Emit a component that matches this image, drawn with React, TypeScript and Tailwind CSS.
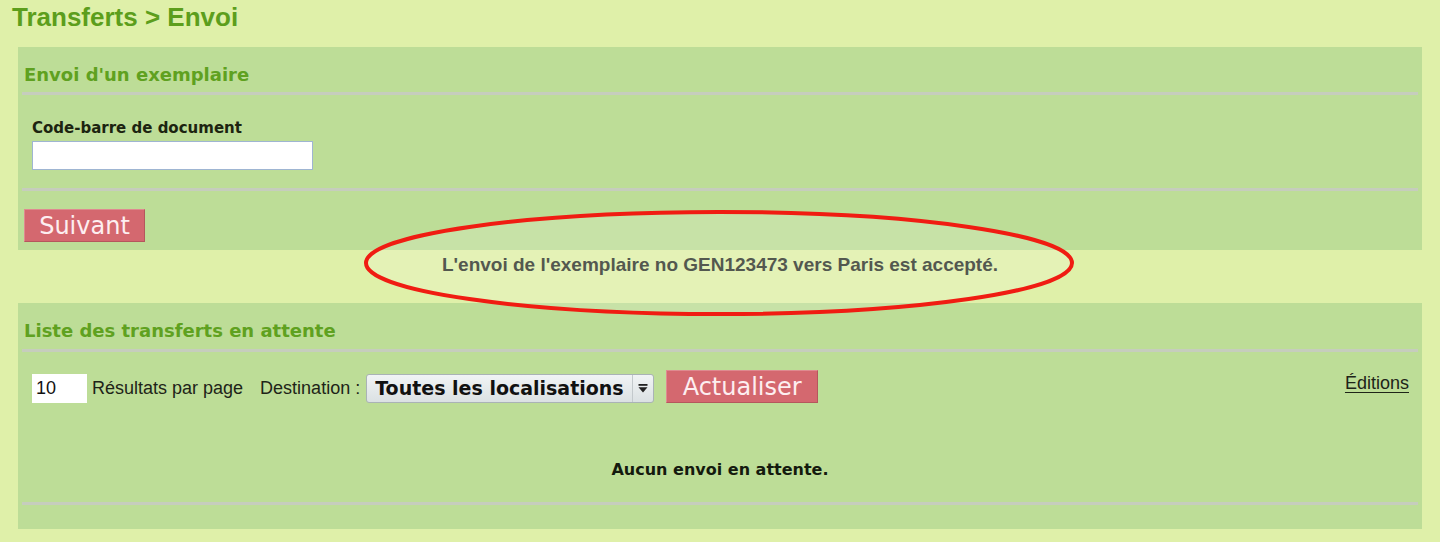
import React from "react";

const dv = "font-['DejaVu_Sans',Verdana,sans-serif]";
const lib = "font-['Liberation_Sans',Arial,sans-serif]";

const Separator = () => <div className="h-[3px] bg-[#c6cdbd]" />;

const RoseButton = ({ label, className }: { label: string; className: string }) => (
  <button
    type="button"
    className={`bg-[#d4686f] border border-t-[#df8a90] border-l-[#df8a90] border-r-[#b5575d] border-b-[#b5575d] text-[#fdeef0] text-[24px] leading-none ${dv} ${className}`}
  >
    {label}
  </button>
);

export default function App() {
  return (
    <div className={`relative min-h-[542px] bg-[#dff0a9] ${lib}`}>
      <h1 className="pl-[12px] pt-[3px] h-[47px] text-[26px] leading-[28px] font-bold text-[#5c9e1c]">
        Transferts &gt; Envoi
      </h1>

      {/* envoi */}
      <div className="mx-[18px] bg-[#bddd97] px-[4px] pb-[8px]">
        <h2 className={`pl-[2px] pt-[17px] text-[18px] leading-[22px] font-bold text-[#5fa120] ${dv}`}>
          Envoi d'un exemplaire
        </h2>
        <div className="mt-[6px]">
          <Separator />
        </div>
        <div className="pl-[10px] pt-[24px]">
          <label className={`block text-[15px] leading-[18px] font-bold text-[#1c2410] ${dv}`}>
            Code-barre de document
          </label>
          <input
            type="text"
            className="mt-[4px] block w-[281px] h-[29px] bg-white border border-[#9fb5d2] outline-none"
          />
        </div>
        <div className="mt-[18px]">
          <Separator />
        </div>
        <div className="pt-[18px] pl-[2px]">
          <RoseButton label="Suivant" className="w-[121px] h-[33px]" />
        </div>
      </div>

      <p className="h-[53px] pt-[4px] text-center text-[19px] leading-[22px] font-bold text-[#33382e]">
        L'envoi de l'exemplaire no GEN123473 vers Paris est accepté.
      </p>

      {/* transferts en attente */}
      <div className="mx-[18px] bg-[#bddd97] px-[4px] pb-[24px]">
        <h2 className={`pl-[2px] pt-[17px] text-[18px] leading-[22px] font-bold text-[#5fa120] ${dv}`}>
          Liste des transferts en attente
        </h2>
        <div className="mt-[7px]">
          <Separator />
        </div>
        <div className="mt-[18px] pl-[10px] pr-[9px] flex items-end">
          <input
            type="text"
            defaultValue="10"
            className="w-[55px] h-[29px] bg-white px-[4px] text-[18px] text-[#111] outline-none"
          />
          <span className="ml-[5px] mb-[4px] text-[18px] leading-[21px] text-[#1e2418]">Résultats par page</span>
          <span className="ml-[17px] mb-[4px] text-[18px] leading-[21px] text-[#1e2418]">Destination :</span>
          <div className="ml-[6px] w-[288px] h-[29px] flex items-stretch border border-[#aab3b6] rounded-[3px] bg-gradient-to-b from-[#f1f4f5] to-[#dbe1e3]">
            <span className={`flex-1 pl-[8px] flex items-center text-[19px] font-bold text-[#111] ${dv}`}>
              Toutes les localisations
            </span>
            <span className="w-[21px] border-l border-[#c3c9cc] flex items-center justify-center">
              <svg width="10" height="9" viewBox="0 0 10 9">
                <rect x="0.5" y="0" width="9" height="1.8" fill="#222" />
                <path d="M0.5 3.2 L9.5 3.2 L5 8.5 Z" fill="#222" />
              </svg>
            </span>
          </div>
          <RoseButton label="Actualiser" className="ml-[12px] w-[152px] h-[33px]" />
          <a href="#" className="ml-auto self-start mt-[3px] text-[18px] leading-[21px] text-[#1e2418] underline underline-offset-[3px]">
            Éditions
          </a>
        </div>
        <p className={`mt-[57px] text-center text-[16px] leading-[20px] font-bold text-[#141a0e] ${dv}`}>
          Aucun envoi en attente.
        </p>
        <div className="mt-[22px]">
          <Separator />
        </div>
      </div>

      {/* annotation */}
      <svg
        className="absolute left-[362px] top-[209px] pointer-events-none"
        width="714"
        height="108"
        viewBox="0 0 714 108"
      >
        <ellipse cx="357" cy="54" rx="353" ry="51" fill="rgba(255,255,255,0.16)" stroke="#f01c12" strokeWidth="4" />
      </svg>
    </div>
  );
}
